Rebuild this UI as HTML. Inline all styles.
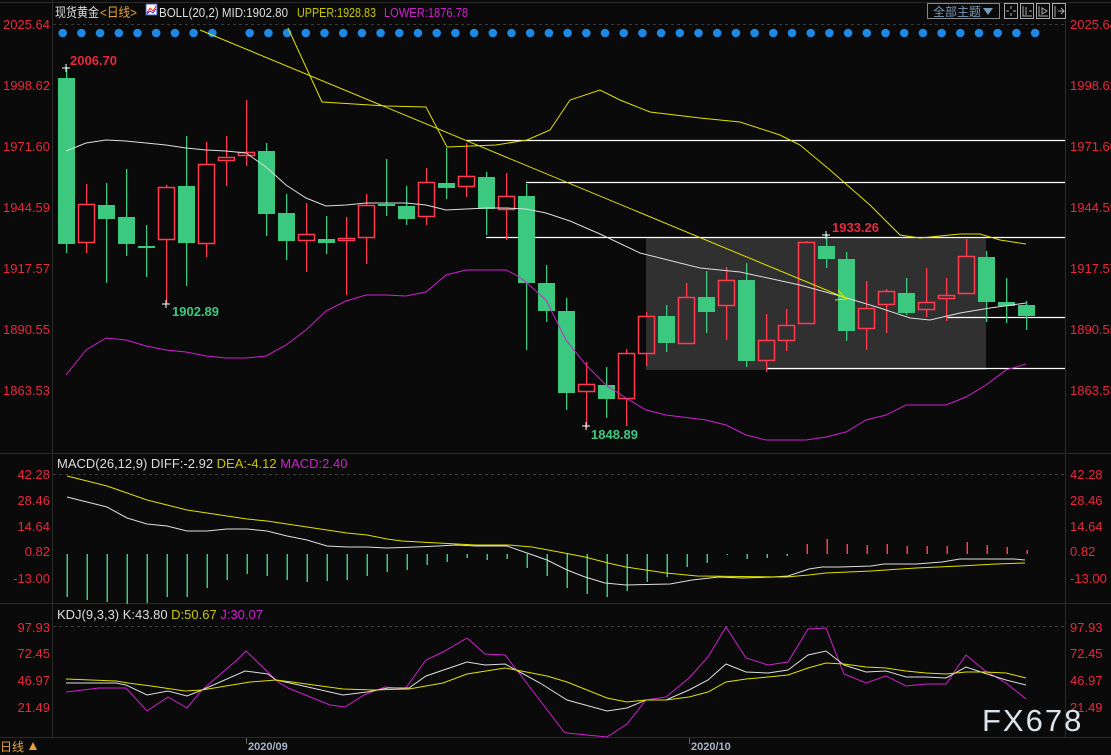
<!DOCTYPE html>
<html><head><meta charset="utf-8"><style>
html,body{margin:0;padding:0;background:#0a0a0a;width:1111px;height:755px;overflow:hidden}
svg{display:block}
text{font-family:"Liberation Sans","Noto Sans CJK SC",sans-serif}
</style></head><body>
<svg id="s" width="1111" height="755" xmlns="http://www.w3.org/2000/svg">
<rect width="1111" height="755" fill="#0a0a0a"/>
<g stroke="#2a2a2a" stroke-width="1" fill="none">
<line x1="0" y1="2.5" x2="1111" y2="2.5"/>
<line x1="52.5" y1="0" x2="52.5" y2="737"/>
<line x1="1065.5" y1="20" x2="1065.5" y2="737"/>
<line x1="0" y1="453.5" x2="1111" y2="453.5"/>
<line x1="0" y1="603.5" x2="1111" y2="603.5"/>
<line x1="0" y1="737.5" x2="1111" y2="737.5"/>
</g>
<g stroke="#3a3a3a" stroke-dasharray="3,3">
<line x1="53" y1="24.5" x2="1065" y2="24.5"/>
<line x1="53" y1="474.5" x2="1065" y2="474.5"/>
<line x1="53" y1="626.5" x2="1065" y2="626.5"/>
</g>
<text x="55" y="17" font-size="13" fill="#ddd" textLength="44" lengthAdjust="spacingAndGlyphs">现货黄金</text>
<text x="100" y="17" font-size="13" fill="#e6a23c" textLength="37" lengthAdjust="spacingAndGlyphs">&lt;日线&gt;</text>
<rect x="146" y="4" width="11" height="11" fill="#fff" stroke="#3355cc"/>
<polyline points="147,13 150,8 153,11 156,6" stroke="#e22" fill="none"/>
<polyline points="147,14 150,11 153,13 156,9" stroke="#33c" fill="none"/>
<text x="159" y="17" font-size="13" fill="#ddd" textLength="129" lengthAdjust="spacingAndGlyphs">BOLL(20,2) MID:1902.80</text>
<text x="297" y="17" font-size="13" fill="#c8c800" textLength="79" lengthAdjust="spacingAndGlyphs">UPPER:1928.83</text>
<text x="384" y="17" font-size="13" fill="#d020d0" textLength="84" lengthAdjust="spacingAndGlyphs">LOWER:1876.78</text>
<rect x="927.5" y="3.5" width="72" height="15" fill="none" stroke="#888"/>
<text x="933" y="16" font-size="12" fill="#7a9ab8">全部主题</text>
<path d="M983 8 L993 8 L988 15 Z" fill="#7a9ab8"/>
<g stroke="#aaa" fill="none">
<rect x="1004.5" y="3.5" width="13" height="15"/><rect x="1020.5" y="3.5" width="13" height="15"/>
<rect x="1036.5" y="3.5" width="13" height="15"/><rect x="1052.5" y="3.5" width="13" height="15"/>
<path d="M1011 6v3M1011 13v3M1006 11h3M1013 11h3"/>
<path d="M1023 6v10h9M1026 7v8M1029 11h3"/>
<path d="M1039 6v10h9M1042 8v6l5-3z"/>
<path d="M1055 6v11M1058 11h6M1061 8l3 3-3 3"/>
</g>
<g font-size="13" fill="#e8283c">
<text x="50" y="29" text-anchor="end">2025.64</text><text x="1070" y="29">2025.64</text>
<text x="50" y="90" text-anchor="end">1998.62</text><text x="1070" y="90">1998.62</text>
<text x="50" y="151" text-anchor="end">1971.60</text><text x="1070" y="151">1971.60</text>
<text x="50" y="212" text-anchor="end">1944.59</text><text x="1070" y="212">1944.59</text>
<text x="50" y="273" text-anchor="end">1917.57</text><text x="1070" y="273">1917.57</text>
<text x="50" y="334" text-anchor="end">1890.55</text><text x="1070" y="334">1890.55</text>
<text x="50" y="395" text-anchor="end">1863.53</text><text x="1070" y="395">1863.53</text>
<text x="50" y="479" text-anchor="end">42.28</text><text x="1070" y="479">42.28</text>
<text x="50" y="505" text-anchor="end">28.46</text><text x="1070" y="505">28.46</text>
<text x="50" y="531" text-anchor="end">14.64</text><text x="1070" y="531">14.64</text>
<text x="50" y="556" text-anchor="end">0.82</text><text x="1070" y="556">0.82</text>
<text x="50" y="583" text-anchor="end">-13.00</text><text x="1070" y="583">-13.00</text>
<text x="50" y="632" text-anchor="end">97.93</text><text x="1070" y="632">97.93</text>
<text x="50" y="658" text-anchor="end">72.45</text><text x="1070" y="658">72.45</text>
<text x="50" y="685" text-anchor="end">46.97</text><text x="1070" y="685">46.97</text>
<text x="50" y="712" text-anchor="end">21.49</text><text x="1070" y="712">21.49</text>
</g>
<g id="dots" fill="#1e88e5"></g>
<rect x="646" y="238" width="340" height="132" fill="#303030"/>
<g stroke="#fff" stroke-width="1.3">
<line x1="466" y1="140.5" x2="1065" y2="140.5"/>
<line x1="526" y1="182.5" x2="1065" y2="182.5"/>
<line x1="486" y1="237.5" x2="1065" y2="237.5"/>
<line x1="946" y1="317.5" x2="1065" y2="317.5"/>
<line x1="766" y1="368.5" x2="1065" y2="368.5"/>
</g>
<g id="candles"></g>
<g fill="none" stroke-width="1">
<polyline stroke="#ddd" points="66,151 86,143 106,140 126,141 146,143 166,145 186,148 206,150 226,151 246,153 266,167 286,185 306,198 326,206 346,205 366,203 386,203 406,203 426,205 446,210 466,209 486,208 506,208 526,209 546,213 570,221 600,234 640,253 700,268 740,272 800,285 840,296 880,308 910,318 930,320 960,313 990,308 1026,303"/>
<polyline stroke="#e0e000" points="288,28 322,102 386,106 426,107 447,147 496,145 527,140 550,130 570,100 600,90 620,100 650,112 700,118 740,122 780,135 800,145 830,170 870,205 900,235 920,238 960,234 980,234 1000,240 1026,244"/>
<polyline stroke="#e0e000" points="200,30 848,299"/>
<polyline stroke="#e0e000" points="838,290 846,299 835,300"/>
<polyline stroke="#d020d0" points="66,375 86,350 106,338 126,340 146,346 166,350 186,352 206,356 226,358 246,358 266,356 286,345 306,330 326,311 346,301 366,295 386,295 406,296 426,292 446,275 466,270 506,270 516,275 526,282 546,300 566,340 586,365 606,385 626,398 646,410 666,415 706,420 726,425 746,435 766,440 806,440 826,437 846,432 866,420 886,415 906,405 946,405 966,397 986,385 1006,370 1026,364"/>
</g>
<g stroke="#fff"><path d="M62 68h8M66 64v8M162 304h8M166 300v8M582 426h8M586 422v8M822 235h8M826 231v8"/></g>
<g font-size="13" font-weight="bold">
<text x="70" y="65" fill="#e8283c">2006.70</text>
<text x="172" y="316" fill="#3cc87f">1902.89</text>
<text x="591" y="439" fill="#3cc87f">1848.89</text>
<text x="832" y="232" fill="#e8283c">1933.26</text>
</g>
<text x="57" y="468" font-size="13" fill="#ddd">MACD(26,12,9) DIFF:-2.92 <tspan fill="#c8c800">DEA:-4.12</tspan> <tspan fill="#d020d0">MACD:2.40</tspan></text>
<g id="macd"></g>
<g fill="none">
<polyline stroke="#ddd" points="67,497 87,502 107,507 127,518 147,524 167,526 187,531 207,531 227,529 247,529 267,531 287,536 307,540 327,546 347,547 367,547 387,548 416,547 438,546 456,545 476,546 507,546 527,553 547,560 567,570 585,577 605,583 626,585 670,584 692,580 719,577 742,578 773,577 788,576 809,569 822,567 840,567 871,566 884,564 916,564 942,562 960,559 1014,559 1025,560"/>
<polyline stroke="#e0e000" points="67,476 87,481 107,486 127,493 147,500 167,505 187,510 207,513 227,516 247,519 267,521 287,524 307,527 327,530 347,533 367,535 387,539 402,541 438,543 476,545 509,545 532,547 559,552 585,557 608,563 626,567 666,573 697,576 786,577 809,575 826,573 871,571 916,568 960,566 996,564 1025,563"/>
</g>
<text x="57" y="619" font-size="13" fill="#ddd">KDJ(9,3,3) K:43.80 <tspan fill="#c8c800">D:50.67</tspan> <tspan fill="#d020d0">J:30.07</tspan></text>
<g fill="none">
<polyline stroke="#d020d0" points="66,692 99,688 126,688 147,711 168,697 187,708 202,690 237,660 246,651 278,682 288,688 330,705 345,707 364,695 385,687 405,689 426,660 443,652 467,638 485,654 505,655 516,669 564,732 567,733 607,737 627,724 646,700 666,697 689,678 708,657 726,627 746,658 768,665 788,662 808,629 826,628 844,674 866,683 886,676 906,686 926,684 946,684 966,655 984,670 1006,683 1026,699"/>
<polyline stroke="#ddd" points="66,683 116,683 126,685 147,695 168,691 187,696 202,690 245,671 268,674 276,680 299,685 343,695 367,692 388,688 409,688 426,676 467,662 485,665 505,664 516,670 540,683 567,700 607,711 627,708 646,700 666,700 689,690 708,680 726,664 746,672 768,673 788,670 808,655 826,651 844,665 866,672 886,671 906,677 926,677 946,678 966,667 984,673 1006,680 1026,685"/>
<polyline stroke="#e0e000" points="66,679 116,681 128,683 151,686 185,691 202,690 250,682 276,680 292,682 343,689 374,690 409,689 443,683 467,674 505,668 516,670 547,676 567,682 607,698 627,702 646,700 666,700 689,697 708,692 726,682 746,679 768,677 788,675 808,668 826,663 844,664 866,667 886,668 906,671 926,673 946,674 966,672 984,672 1006,673 1026,678"/>
</g>
<text x="982" y="731" font-size="31" fill="#dde3ea" letter-spacing="2">FX678</text>
<text x="0" y="751" font-size="12" fill="#e6a23c">日线</text>
<path d="M29 750 L33 742 L37 750 Z" fill="#e6a23c"/>
<line x1="246.5" y1="738" x2="246.5" y2="744" stroke="#666"/>
<line x1="689.5" y1="738" x2="689.5" y2="744" stroke="#666"/>
<text x="248" y="750" font-size="11" fill="#a8b4c8" font-weight="bold">2020/09</text>
<text x="691" y="750" font-size="11" fill="#a8b4c8" font-weight="bold">2020/10</text>
</svg>
<script>
var NS="http://www.w3.org/2000/svg";
function el(p,t,a){var e=document.createElementNS(NS,t);for(var k in a)e.setAttribute(k,a[k]);p.appendChild(e);return e;}
var d=document.getElementById('dots');
for(var i=0;i<55;i++){var x=62.7+i*18.7;if(x>1045)break;if(Math.abs(x-231)<3)continue;el(d,'circle',{cx:x,cy:33,r:4.3});}
var C=[['g',78,244,67,253],['r',204,243,184,253],['g',205,219,183,283],['g',217,244,169,256],['g',246,248,225,277],
['r',187,240,185,304],['g',186,243,136,286],['r',164,244,142,257],['r',157,161,136,186],['r',152,156,100,166],
['g',151,214,143,236],['g',213,241,194,260],['r',234,241,203,272],['g',239,243,216,254],['r',238,240,217,295],
['r',205,238,194,264],['g',204,206,159,216],['g',206,219,186,225],['r',182,217,168,225],['g',183,188,148,199],
['r',176,187,143,197],['g',177,209,172,235],['r',196,210,173,240],['g',196,283,184,350],['g',283,311,265,322],
['g',311,393,298,410],['r',384,392,362,428],['g',385,399,367,418],['r',353,399,349,426],['r',316,354,312,366],
['g',316,343,305,352],['r',297,344,283,344],['g',297,312,271,333],['r',280,306,267,340],['g',280,361,263,367],
['r',340,361,314,372],['r',325,341,309,351],['r',242,324,241,324],['g',246,259,234,268],['g',259,331,252,341],
['r',308,329,281,350],['r',291,305,289,333],['g',293,313,278,315],['r',302,310,268,317],['r',295,299,278,321],
['r',256,294,239,294],['g',257,302,251,322],['g',302,306,278,323],['g',305,316,301,330]];
var g=document.getElementById('candles');
C.forEach(function(c,i){var x=66+i*20,G='#3cc87f',R='#ff3b50';
 if(c[0]=='g'){el(g,'rect',{x:x,y:c[3],width:1.3,height:c[4]-c[3],fill:G});el(g,'rect',{x:x-8,y:c[1],width:17,height:Math.max(2,c[2]-c[1]),fill:G});}
 else{el(g,'rect',{x:x,y:c[3],width:1.3,height:Math.max(0,c[1]-c[3]),fill:R});el(g,'rect',{x:x,y:c[2],width:1.3,height:Math.max(0,c[4]-c[2]),fill:R});
 el(g,'rect',{x:x-7.5,y:c[1]+.5,width:16,height:Math.max(2,c[2]-c[1]-1),fill:'none',stroke:R,'stroke-width':1.5});}
});
var m=document.getElementById('macd');
var B=[597,600,602,604,603,597,597,588,580,574,576,580,582,581,580,576,572,570,565,562,558,560,559,568,576,588,594,597,591,582,577,567,563,555,559,558,556,544,539,544,545,544,546,546,546,542,545,547,550];
B.forEach(function(b,i){var x=66.5+i*20;var t=Math.min(554,b),h=Math.abs(b-554)||1;el(m,'rect',{x:x,y:t,width:1.5,height:h,fill:b>554?'#3cc87f':'#ff3b50'});});
</script>
</body></html>
